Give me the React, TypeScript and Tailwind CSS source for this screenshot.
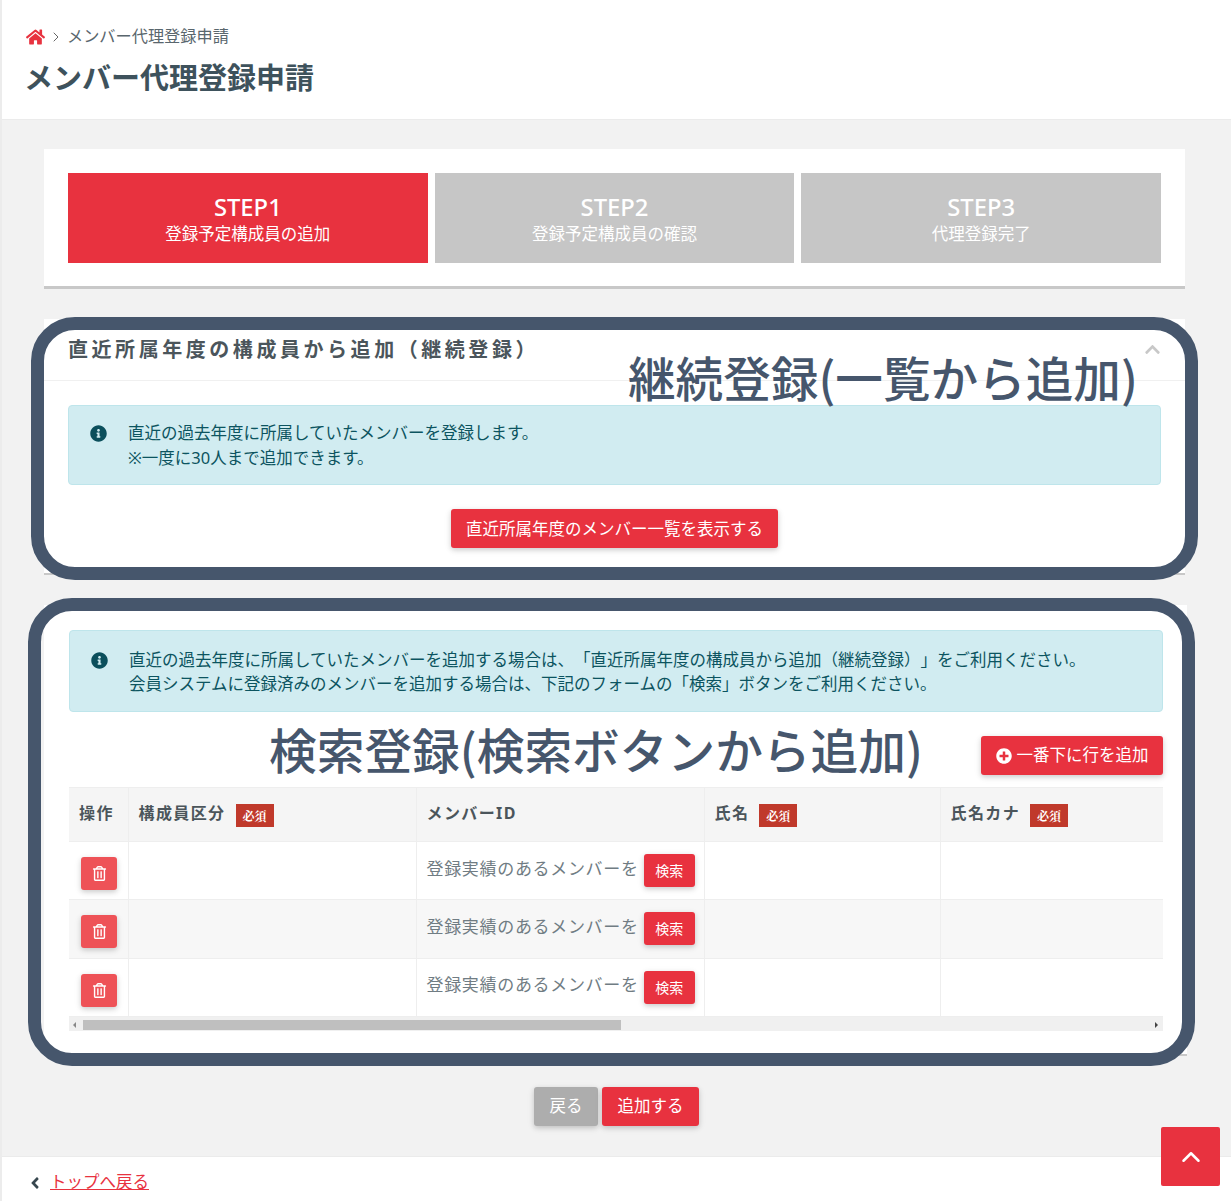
import { ChevronRight, ChevronUp } from "lucide-react";
import { FaAngleLeft, FaChevronUp, FaHome, FaInfoCircle, FaPlusCircle, FaRegTrashAlt } from "react-icons/fa";

const raised = "shadow-[0_2px_5px_rgba(0,0,0,0.16),0_2px_10px_rgba(0,0,0,0.06)]";

function Badge() {
  return (
    <span className="ml-[10px] inline-flex h-[23px] w-[38px] translate-y-[2px] items-center justify-center bg-[#c0392b] text-[12px] font-bold tracking-normal text-white [font-family:'Noto_Serif_CJK_JP','Noto_Sans_CJK_JP',serif]">
      必須
    </span>
  );
}

function Step({ title, sub, active }: { title: string; sub: string; active?: boolean }) {
  return (
    <div className={`flex h-[90px] flex-1 flex-col items-center justify-center pt-[2px] text-white ${active ? "bg-[#e8323f]" : "bg-[#c6c6c6]"}`}>
      <div className="text-[23.8px] leading-[30px] font-medium">{title}</div>
      <div className="text-[16.5px] leading-[24px]">{sub}</div>
    </div>
  );
}

function Row({ shaded }: { shaded?: boolean }) {
  const cell = "border-r border-b border-[#eeeeee] last:border-r-0";
  return (
    <tr className={`h-[58.3px] ${shaded ? "bg-[#f7f7f7]" : "bg-white"}`}>
      <td className={cell}>
        <button className={`mx-auto mt-[6px] flex h-[33px] w-[36px] translate-x-[1px] items-center justify-center rounded-[3px] bg-[#ee5257] text-white ${raised}`}>
          <FaRegTrashAlt className="h-[15px] w-[15px]" />
        </button>
      </td>
      <td className={cell}></td>
      <td className={`${cell} pl-[10px]`}>
        <div className="flex items-center">
          <span className="mt-[-4px] text-[17px] tracking-[0.68px] text-[#707c83]">登録実績のあるメンバーを</span>
          <button className={`ml-[5px] h-[33px] w-[51px] rounded-[3px] bg-[#e8323f] text-[14px] text-white ${raised}`}>検索</button>
        </div>
      </td>
      <td className={cell}></td>
      <td className={cell}></td>
    </tr>
  );
}

export default function App() {
  const th = "border-r border-b border-[#eeeeee] pb-[3px] pl-[10px] text-left text-[16px] font-bold tracking-[1.4px] text-[#4b555b] last:border-r-0";
  return (
    <div className="relative h-[1201px] w-[1231px] overflow-hidden border-l-2 border-[#ececec] bg-white [font-family:'Noto_Sans','Noto_Sans_CJK_JP',sans-serif] [text-spacing-trim:space-all]">
      <header className="h-[120px] border-b border-[#ebebeb] pl-[24px] pt-[26px]">
        <div className="flex h-[21px] items-center text-[16.2px] text-[#59666d]">
          <FaHome className="h-[18px] w-[19px] text-[#e8323f]" />
          <ChevronRight className="ml-[3px] h-[16px] w-[16px] text-[#666666]" strokeWidth={1.5} />
          <span className="ml-[3px]">メンバー代理登録申請</span>
        </div>
        <h1 className="mt-[12px] ml-[-2px] text-[29px] leading-[38px] font-bold text-[#3e525c]">メンバー代理登録申請</h1>
      </header>

      <main className="h-[1036px] bg-[#f2f2f2] pl-[42px] pt-[29px]">
        <section className="h-[140px] w-[1141px] border-b-[3px] border-[#c8c8c8] bg-white px-[24px] pt-[24px]">
          <div className="flex gap-[7px]">
            <Step title="STEP1" sub="登録予定構成員の追加" active />
            <Step title="STEP2" sub="登録予定構成員の確認" />
            <Step title="STEP3" sub="代理登録完了" />
          </div>
        </section>

        <section className="mt-[30px] h-[256px] w-[1141px] border-b-2 border-[#c8c8c8] bg-white">
          <div className="flex h-[62px] items-center justify-between border-b border-[#f0f0f0] pl-[24px] pr-[24px]">
            <h2 className="text-[20px] font-bold tracking-[3.55px] text-[#4b555b]">直近所属年度の構成員から追加（継続登録）</h2>
            <FaChevronUp className="h-[17px] w-[17px] text-[#c8c8c8]" />
          </div>
          <div className="px-[24px] pt-[24px]">
            <div className="flex h-[80px] rounded-[4px] border border-[#bee5eb] bg-[#d1ecf1] pl-[21px] pt-[14px] text-[16.5px] leading-[25px] text-[#0c5460]">
              <FaInfoCircle className="mt-[5px] h-[17px] w-[17px] text-[#0b4f5c]" />
              <div className="ml-[21px]">
                <p>直近の過去年度に所属していたメンバーを登録します。</p>
                <p>※一度に30人まで追加できます。</p>
              </div>
            </div>
            <div className="mt-[24px] flex justify-center">
              <button className={`h-[39px] w-[327px] rounded-[3px] bg-[#e8323f] pt-[1px] text-[16.5px] text-white ${raised}`}>
                直近所属年度のメンバー一覧を表示する
              </button>
            </div>
          </div>
        </section>

        <section className="mt-[30px] h-[451px] w-[1143px] border-b-2 border-[#c8c8c8] bg-white pl-[25px] pr-[24px] pt-[25px]">
          <div className="flex h-[82px] rounded-[4px] border border-[#bee5eb] bg-[#d1ecf1] pl-[21px] pt-[17px] text-[16.5px] leading-[24px] text-[#0c5460]">
            <FaInfoCircle className="mt-[4px] h-[17px] w-[17px] text-[#0b4f5c]" />
            <div className="ml-[21px]">
              <p>直近の過去年度に所属していたメンバーを追加する場合は、「直近所属年度の構成員から追加（継続登録）」をご利用ください。</p>
              <p>会員システムに登録済みのメンバーを追加する場合は、下記のフォームの「検索」ボタンをご利用ください。</p>
            </div>
          </div>

          <div className="mt-[24px] flex justify-end">
            <button className={`flex h-[39px] w-[182px] items-center justify-center rounded-[3px] bg-[#e8323f] text-[16.5px] text-white ${raised}`}>
              <FaPlusCircle className="mr-[5px] h-[16px] w-[16px]" />
              一番下に行を追加
            </button>
          </div>

          <table className="mt-[12px] w-[1094px] table-fixed border-collapse">
            <colgroup>
              <col className="w-[59px]" />
              <col className="w-[288px]" />
              <col className="w-[288px]" />
              <col className="w-[236px]" />
              <col className="w-[223px]" />
            </colgroup>
            <thead>
              <tr className="h-[54px] border-t border-[#eeeeee] bg-[#f5f5f5]">
                <th className={th}>操作</th>
                <th className={th}>構成員区分<Badge /></th>
                <th className={th}>メンバーID</th>
                <th className={th}>氏名<Badge /></th>
                <th className={th}>氏名カナ<Badge /></th>
              </tr>
            </thead>
            <tbody>
              <Row />
              <Row shaded />
              <Row />
            </tbody>
          </table>
          <div className="flex h-[14px] w-[1094px] items-center bg-[#f0f0f0] pt-[2px]">
            <span className="ml-[4px] h-0 w-0 border-y-[3px] border-r-[3px] border-y-transparent border-r-[#888888]" />
            <div className="ml-[7px] h-[10px] w-[538px] bg-[#bfbfbf]" />
            <span className="ml-auto mr-[5px] h-0 w-0 border-y-[3px] border-l-[3px] border-y-transparent border-l-[#444444]" />
          </div>
        </section>

        <div className="mt-[31px] ml-[490px] flex gap-[4px]">
          <button className={`h-[39px] w-[64px] rounded-[3px] bg-[#adadad] text-[16.5px] text-white ${raised}`}>戻る</button>
          <button className={`h-[39px] w-[97px] rounded-[3px] bg-[#e8323f] text-[16.5px] text-white ${raised}`}>追加する</button>
        </div>
      </main>

      <footer className="flex h-[45px] items-center border-t border-[#ebebeb] bg-white pl-[26px] pt-[7px]">
        <FaAngleLeft className="h-[18px] w-[14px] text-[#37474f]" />
        <a className="ml-[8px] text-[16.5px] text-[#e8323f] underline decoration-[#e8323f]">トップへ戻る</a>
      </footer>

      <button className="absolute left-[1159px] top-[1127px] flex h-[59px] w-[59px] items-center justify-center rounded-[2px] bg-[#e8323f] text-white">
        <ChevronUp className="h-[30px] w-[30px]" strokeWidth={2} />
      </button>

      {/* annotation frames pasted over the screenshot */}
      <div className="pointer-events-none absolute left-[29px] top-[317px] h-[263px] w-[1167px] rounded-[44px] border-[13px] border-[#46566c]" />
      <div className="pointer-events-none absolute left-[26px] top-[598px] h-[468px] w-[1167px] rounded-[44px] border-[13px] border-[#46566c]" />
      <div className="absolute left-[626px] top-[342px] text-[47.6px] leading-[70px] font-medium whitespace-nowrap text-[#46566c] [font-family:'Noto_Sans_CJK_JP',sans-serif]">
        継続登録(一覧から追加)
      </div>
      <div className="absolute left-[267px] top-[714px] text-[47.7px] leading-[70px] font-medium whitespace-nowrap text-[#46566c] [font-family:'Noto_Sans_CJK_JP',sans-serif]">
        検索登録(検索ボタンから追加)
      </div>
    </div>
  );
}
